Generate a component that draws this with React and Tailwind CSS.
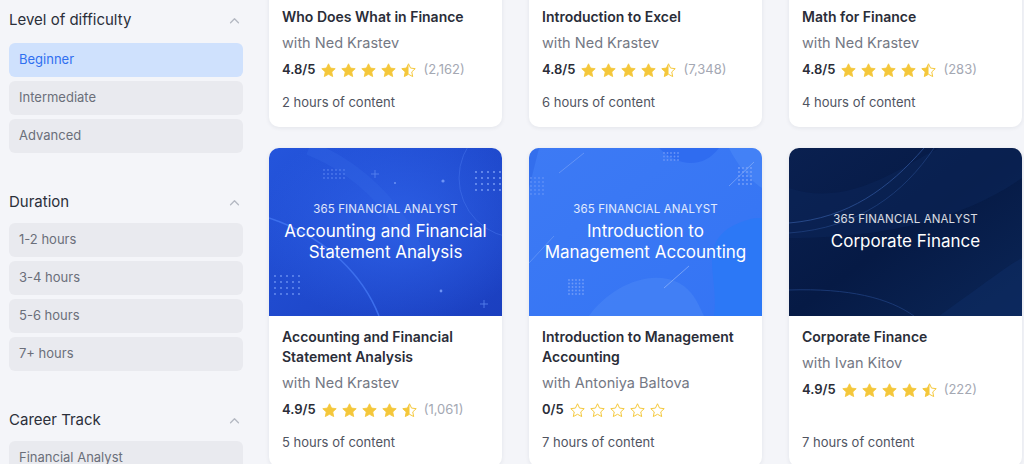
import React from 'react';

const STAR = 'M12 2.5l2.9 6.1 6.6.8-4.9 4.6 1.3 6.6L12 17.3l-5.9 3.3 1.3-6.6-4.9-4.6 6.6-.8z';

const Star = ({ type, id }) => (
  <svg viewBox="0 0 24 24" className="w-[17px] h-[17px]">
    <defs>
      <clipPath id={id}>
        <rect x="0" y="0" width="12" height="24" />
      </clipPath>
    </defs>
    {type === 'full' && <path d={STAR} fill="#f4c73b" stroke="#f4c73b" strokeWidth="1.2" strokeLinejoin="round" />}
    {type === 'half' && (
      <>
        <path d={STAR} fill="#f4c73b" clipPath={`url(#${id})`} />
        <path d={STAR} fill="none" stroke="#f4c73b" strokeWidth="1.4" strokeLinejoin="round" />
      </>
    )}
    {type === 'empty' && <path d={STAR} fill="none" stroke="#f4c73b" strokeWidth="1.4" strokeLinejoin="round" />}
  </svg>
);

const Stars = ({ rating, uid }) => {
  const types = rating === 0 ? ['empty', 'empty', 'empty', 'empty', 'empty'] : ['full', 'full', 'full', 'full', 'half'];
  return (
    <div className="flex items-center gap-[3px]">
      {types.map((t, i) => (
        <Star key={i} type={t} id={`clip-${uid}-${i}`} />
      ))}
    </div>
  );
};

const Chevron = () => (
  <svg viewBox="0 0 12 8" className="w-[11px] h-[7px]">
    <path d="M1.5 6.5L6 2l4.5 4.5" fill="none" stroke="#b4b8c2" strokeWidth="1.5" strokeLinecap="round" strokeLinejoin="round" />
  </svg>
);

const DotGrid = ({ x, y, cols, rows, gap, color }) => {
  const dots = [];
  for (let r = 0; r < rows; r++)
    for (let c = 0; c < cols; c++) dots.push(<circle key={`${r}-${c}`} cx={x + c * gap} cy={y + r * gap} r="0.9" fill={color} />);
  return <g>{dots}</g>;
};

const ArtAccounting = () => (
  <svg viewBox="0 0 233 168" preserveAspectRatio="none" className="absolute inset-0 w-full h-full">
    <defs>
      <linearGradient id="ga" x1="0" y1="0" x2="1" y2="1">
        <stop offset="0" stopColor="#2455dc" />
        <stop offset="1" stopColor="#1b3fbf" />
      </linearGradient>
      <radialGradient id="gaglow" cx="0.55" cy="0.45" r="0.6">
        <stop offset="0" stopColor="#2f63ea" stopOpacity="0.8" />
        <stop offset="1" stopColor="#2f63ea" stopOpacity="0" />
      </radialGradient>
    </defs>
    <rect width="233" height="168" fill="url(#ga)" />
    <rect width="233" height="168" fill="url(#gaglow)" />
    <circle cx="250" cy="30" r="60" fill="none" stroke="#4a78ee" strokeOpacity="0.6" strokeWidth="0.8" />
    <path d="M0 70 C 60 90, 95 130, 110 168" fill="none" stroke="#3f72f0" strokeWidth="1.6" strokeOpacity="0.9" />
    <path d="M40 0 C 90 20, 130 60, 150 110" fill="none" stroke="#3366e6" strokeOpacity="0.35" strokeWidth="14" />
    <DotGrid x={207} y={24} cols={5} rows={4} gap={6} color="#7fa2f7" />
    <DotGrid x={6} y={128} cols={5} rows={4} gap={6} color="#6e93f2" />
    <DotGrid x={55} y={22} cols={6} rows={3} gap={4} color="#4e79ec" />
    <circle cx="174" cy="33" r="1.6" fill="#6d93f5" />
    <circle cx="172" cy="143" r="1.4" fill="#6d93f5" />
    <circle cx="126" cy="35" r="1" fill="#6d93f5" />
    <path d="M106 22v8M102 26h8" stroke="#5c86f0" strokeWidth="0.8" />
    <path d="M215 152v8M211 156h8" stroke="#5c86f0" strokeWidth="0.8" />
  </svg>
);

const ArtManagement = () => (
  <svg viewBox="0 0 233 168" preserveAspectRatio="none" className="absolute inset-0 w-full h-full">
    <defs>
      <linearGradient id="gm" x1="0" y1="0" x2="1" y2="1">
        <stop offset="0" stopColor="#3d7af4" />
        <stop offset="1" stopColor="#3474f4" />
      </linearGradient>
    </defs>
    <rect width="233" height="168" fill="url(#gm)" />
    <path d="M130 0 C 150 20, 175 20, 190 0 Z" fill="#2f6cf0" />
    <path d="M185 168 C 190 130, 170 100, 200 80 C 220 68, 233 70, 233 70 L233 168 Z" fill="#2c78f6" />
    <path d="M60 168 C 80 140, 120 120, 150 135 C 165 143, 170 158, 175 168 Z" fill="#4a86f6" fillOpacity="0.55" />
    <path d="M200 0 C 215 30, 233 40, 233 40 L233 0 Z" fill="#4b88f7" fillOpacity="0.6" />
    <path d="M0 0 L 10 0 L 0 40 Z" fill="#2a63e6" fillOpacity="0.5" />
    <path d="M30 25 L 55 5" stroke="#8fb3fa" strokeOpacity="0.6" strokeWidth="0.8" />
    <path d="M0 115 L 25 88" stroke="#8fb3fa" strokeOpacity="0.5" strokeWidth="0.8" />
    <path d="M135 140 L 160 118" stroke="#a7c3fb" strokeOpacity="0.7" strokeWidth="0.8" />
    <path d="M200 38 L 225 14" stroke="#a7c3fb" strokeOpacity="0.6" strokeWidth="0.8" />
    <DotGrid x={2} y={30} cols={4} rows={5} gap={4} color="#5f8ff6" />
    <DotGrid x={40} y={132} cols={5} rows={5} gap={3.5} color="#6e9af8" />
    <DotGrid x={135} y={5} cols={5} rows={3} gap={3.5} color="#6794f7" />
    <DotGrid x={210} y={20} cols={4} rows={5} gap={4} color="#79a2f8" />
  </svg>
);

const ArtCorporate = () => (
  <svg viewBox="0 0 233 168" preserveAspectRatio="none" className="absolute inset-0 w-full h-full">
    <defs>
      <linearGradient id="gc" x1="0" y1="0" x2="1" y2="1">
        <stop offset="0" stopColor="#0a2050" />
        <stop offset="0.5" stopColor="#061a45" />
        <stop offset="1" stopColor="#0b2657" />
      </linearGradient>
    </defs>
    <rect width="233" height="168" fill="url(#gc)" />
    <path d="M0 40 C 60 60, 110 20, 150 0 L 233 0 L233 30 C 190 60, 120 90, 0 90 Z" fill="#0c2659" fillOpacity="0.5" />
    <path d="M0 75 C 60 70, 100 40, 135 0" fill="none" stroke="#2a4d8f" strokeWidth="0.9" />
    <path d="M0 85 C 70 80, 115 45, 145 0" fill="none" stroke="#2a4d8f" strokeWidth="0.7" strokeOpacity="0.8" />
    <path d="M0 142 C 60 140, 100 150, 125 168" fill="none" stroke="#1c3b78" strokeWidth="0.9" />
    <path d="M150 168 C 190 140, 215 120, 233 110 L 233 168 Z" fill="#0e2c63" fillOpacity="0.6" />
  </svg>
);

const ArtPlain = () => (
  <div className="absolute inset-0 bg-gradient-to-br from-[#2455dc] to-[#1b3fbf]" />
);

const courses = [
  { title: 'Who Does What in Finance', author: 'Ned Krastev', rating: '4.8/5', value: 4.8, count: '(2,162)', hours: '2 hours of content', art: ArtPlain },
  { title: 'Introduction to Excel', author: 'Ned Krastev', rating: '4.8/5', value: 4.8, count: '(7,348)', hours: '6 hours of content', art: ArtPlain },
  { title: 'Math for Finance', author: 'Ned Krastev', rating: '4.8/5', value: 4.8, count: '(283)', hours: '4 hours of content', art: ArtPlain },
  { title: 'Accounting and Financial Statement Analysis', author: 'Ned Krastev', rating: '4.9/5', value: 4.9, count: '(1,061)', hours: '5 hours of content', art: ArtAccounting, banner: ['Accounting and Financial', 'Statement Analysis'] },
  { title: 'Introduction to Management Accounting', author: 'Antoniya Baltova', rating: '0/5', value: 0, count: '', hours: '7 hours of content', art: ArtManagement, banner: ['Introduction to', 'Management Accounting'] },
  { title: 'Corporate Finance', author: 'Ivan Kitov', rating: '4.9/5', value: 4.9, count: '(222)', hours: '7 hours of content', art: ArtCorporate, banner: ['Corporate Finance'] },
];

const CourseCard = ({ course, idx }) => {
  const Art = course.art;
  return (
    <div className="bg-white rounded-[10px] overflow-hidden shadow-[0_1px_4px_rgba(30,40,70,0.08)] flex flex-col">
      <div className="relative h-[168px] flex flex-col items-center justify-center text-center">
        <Art />
        {course.banner && (
          <div className="relative flex flex-col items-center">
            <div className="text-[11.5px] leading-[14px] tracking-[0.01em] text-white/85 mb-[5px]">365 FINANCIAL ANALYST</div>
            {course.banner.map((l) => (
              <div key={l} className="text-[17px] leading-[21px] text-white">{l}</div>
            ))}
          </div>
        )}
      </div>
      <div className="flex-1 flex flex-col px-[13px] pt-[11px] pb-[15px]">
        <div className="text-[14px] leading-[20px] font-semibold text-[#2a2d38] pr-2">{course.title}</div>
        <div className="mt-[6px] text-[14.5px] leading-[20px] text-[#747884]">with {course.author}</div>
        <div className="mt-[7px] flex items-center gap-[5px] h-[20px]">
          <span className="text-[13px] font-semibold text-[#2a2d38]">{course.rating}</span>
          <Stars rating={course.value} uid={idx} />
          {course.count && <span className="ml-[1px] text-[13px] text-[#a4a8b3]">{course.count}</span>}
        </div>
        <div className="mt-auto pt-[12px] text-[13px] leading-[20px] text-[#50545f]">{course.hours}</div>
      </div>
    </div>
  );
};

const FilterSection = ({ title, items, active, className, headGap }) => (
  <div className={className}>
    <div className={`flex items-center justify-between h-[20px] pr-[3px] ${headGap}`}>
      <span className="text-[15px] text-[#2b2f3a]">{title}</span>
      <Chevron />
    </div>
    <div className="flex flex-col gap-[4px]">
      {items.map((it) => (
        <div
          key={it}
          className={`h-[34px] rounded-[6px] flex items-center pl-[10px] text-[13px] ${
            it === active ? 'bg-[#cfe1fd] text-[#2f6ff0]' : 'bg-[#e9eaef] text-[#6b6f7a]'
          }`}
        >
          {it}
        </div>
      ))}
    </div>
  </div>
);

export default function App() {
  return (
    <div className="h-[464px] w-[1024px] overflow-hidden bg-[#f4f5f9] flex font-['Inter',sans-serif]">
      <aside className="w-[269px] shrink-0 pl-[9px] pr-[26px] pt-[10px]">
        <FilterSection headGap="mb-[13px]" title="Level of difficulty" items={['Beginner', 'Intermediate', 'Advanced']} active="Beginner" />
        <FilterSection headGap="mb-[11px]" className="mt-[39px]" title="Duration" items={['1-2 hours', '3-4 hours', '5-6 hours', '7+ hours']} />
        <FilterSection headGap="mb-[11px]" className="mt-[39px]" title="Career Track" items={['Financial Analyst', 'Data Scientist']} />
      </aside>
      <main className="flex-1 pr-[2px]">
        <div className="grid grid-cols-3 gap-x-[27px] gap-y-[21px] -mt-[172px]">
          {courses.map((c, i) => (
            <CourseCard key={c.title} course={c} idx={i} />
          ))}
        </div>
      </main>
    </div>
  );
}
